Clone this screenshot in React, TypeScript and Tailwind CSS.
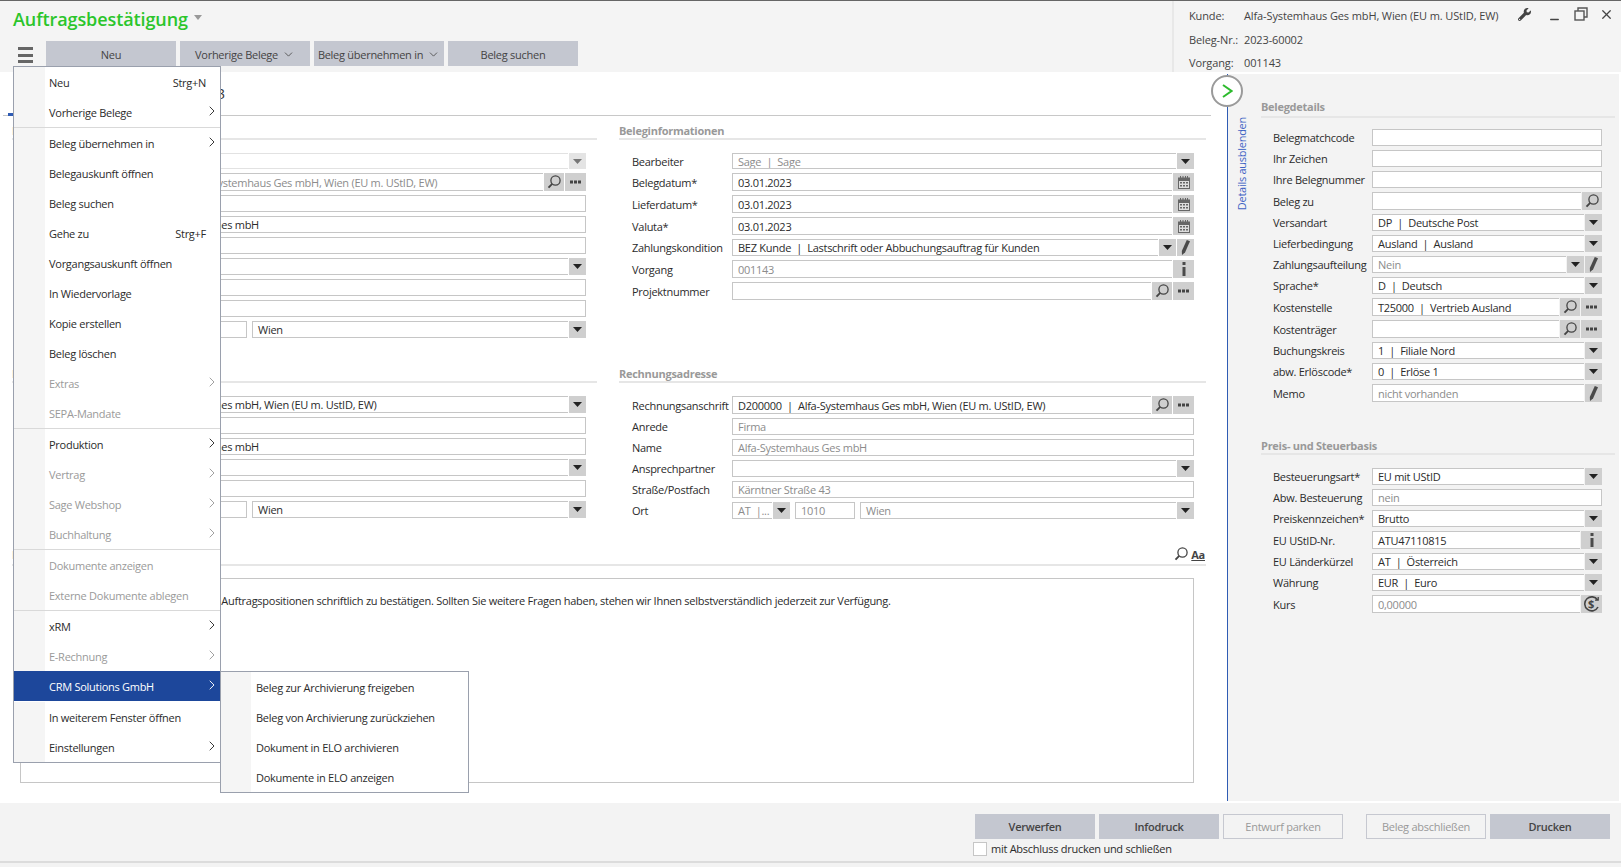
import React from 'react';
import { ChevronDown, ChevronRight, Minus, X } from 'lucide-react';
import { FaWrench } from 'react-icons/fa';

type Btn = 'select' | 'search' | 'dots' | 'calendar' | 'pencil' | 'info' | 'rate';

const SearchIcon = ({ size = 14 }: { size?: number }) => (
  <svg width={size} height={size} viewBox="0 0 14 14" fill="none" stroke="#444" strokeWidth="1.3">
    <circle cx="8.5" cy="5.5" r="4.6" />
    <path d="M5.2 8.8 1.5 12.6" strokeWidth="1.9" />
  </svg>
);

const BtnIcon = ({ type, off }: { type: Btn; off?: boolean }) => {
  if (type === 'select')
    return (
      <svg width="9" height="5" viewBox="0 0 9 5">
        <path d="M0 0h9L4.5 5z" fill={off ? '#777' : '#222'} />
      </svg>
    );
  if (type === 'search') return <SearchIcon />;
  if (type === 'dots')
    return (
      <svg width="11" height="4" viewBox="0 0 11 4" fill="#444">
        <rect width="3" height="3" y="0.5" />
        <rect width="3" height="3" x="4" y="0.5" />
        <rect width="3" height="3" x="8" y="0.5" />
      </svg>
    );
  if (type === 'calendar')
    return (
      <svg width="12" height="13" viewBox="0 0 12 13" fill="#666">
        <path d="M0 1.5h2V0h1v1.5h1.5V0h1v1.5H7V0h1v1.5h1V0h1v1.5h2V13H0z" />
        <path d="M1 5h10v7H1z" fill="#ddd" />
        <path d="M2 6h2v1.5H2zM5 6h2v1.5H5zM8 6h2v1.5H8zM2 9h2v1.5H2zM5 9h2v1.5H5zM8 9h2v1.5H8z" />
      </svg>
    );
  if (type === 'pencil')
    return (
      <svg width="9" height="15" viewBox="0 0 9 15" fill="#4a4a4a">
        <path d="M5.8 0 9 1.3 4 12.5 1 15 .8 11z" />
      </svg>
    );
  if (type === 'info')
    return (
      <svg width="4" height="14" viewBox="0 0 4 14" fill="#4a4a4a">
        <rect x="0.5" width="3" height="3" />
        <rect x="0.5" y="5" width="3" height="9" />
      </svg>
    );
  return (
    <svg width="17" height="16" viewBox="0 0 17 16" fill="none" stroke="#444" strokeWidth="1.6">
      <path d="M14.6 4A7 7 0 1 0 15 11" />
      <path d="M12 4.2h3.2V1" strokeWidth="1.3" />
      <text x="8" y="12" textAnchor="middle" fontSize="11" fontWeight="700" fill="#444" stroke="none" fontFamily="Open Sans">$</text>
    </svg>
  );
};

const btnWidth = (b: Btn) => {
  if (b === 'select' || b === 'pencil') return 'w-[17px]';
  if (b === 'search') return 'w-[20px]';
  return 'w-[21px]';
};

const Field = ({
  value = '',
  muted,
  off,
  btns = [],
  h = 'h-[17px]',
  className = 'w-full',
}: {
  value?: string;
  muted?: boolean;
  off?: boolean;
  btns?: Btn[];
  h?: string;
  className?: string;
}) => (
  <div className={`flex shrink-0 gap-px ${h} ${className}`}>
    <div
      className={`flex min-w-0 flex-1 items-center overflow-hidden whitespace-pre border bg-white pl-[5px] ${
        off ? 'border-[#e2e2e2]' : 'border-[#c6c6c6]'
      } ${btns.length ? 'border-r-0' : ''} ${muted ? 'text-[#8c8c8c]' : 'text-[#2b2b2b]'}`}
    >
      {value}
    </div>
    {btns.map((b, i) => (
      <div key={i} className={`flex items-center justify-center ${btnWidth(b)} ${off ? 'bg-[#e4e4e4]' : 'bg-[#cfcfcf]'}`}>
        <BtnIcon type={b} off={off} />
      </div>
    ))}
  </div>
);

const Row = ({ label, labelW, children }: { label?: string; labelW: string; children: React.ReactNode }) => (
  <div className="flex items-center">
    <div className={`shrink-0 whitespace-nowrap text-[#2b2b2b] ${labelW}`}>{label}</div>
    <div className="flex min-w-0 flex-1 gap-[5px]">{children}</div>
  </div>
);

const Heading = ({ children, className = 'pt-[6px]' }: { children?: React.ReactNode; className?: string }) => (
  <div className={`flex h-[24px] items-center border-b-2 border-[#e6e6e6] font-bold text-[#999] ${className}`}>
    {children}
  </div>
);

const OrtFields = ({ muted, plain }: { muted?: boolean; plain?: boolean }) => (
  <>
    <Field value={plain ? '' : 'AT  |...'} muted={muted} btns={['select']} className="w-[58px]" />
    <Field value={plain ? '' : '1010'} muted={muted} className="w-[60px]" />
    <Field value="Wien" muted={muted} btns={['select']} className="flex-1" />
  </>
);

const tall = 'h-[18px]';
const lw = 'w-[100px]';
const ll = 'w-[112px]';

// left column: the open menu lies over its labels
const LeftTop = () => (
  <div className="flex flex-col gap-1 pl-[12px] pr-[11px]">
    <Row labelW={ll}><Field off h="h-[16px]" btns={['select']} /></Row>
    <Row labelW={ll}><Field muted h={tall} value="D200000  |  Alfa-Systemhaus Ges mbH, Wien (EU m. UStID, EW)" btns={['search', 'dots']} /></Row>
    <Row labelW={ll}><Field /></Row>
    <Row labelW={ll}><Field value="Alfa-Systemhaus Ges mbH" /></Row>
    <Row labelW={ll}><Field /></Row>
    <Row labelW={ll}><Field btns={['select']} /></Row>
    <Row labelW={ll}><Field /></Row>
    <Row labelW={ll}><Field /></Row>
    <Row labelW={ll}><OrtFields plain /></Row>
  </div>
);

const LeftBottom = () => (
  <div className="flex flex-col gap-1 pl-[12px] pr-[11px]">
    <Row labelW={ll}><Field value="Alfa-Systemhaus Ges mbH, Wien (EU m. UstID, EW)" btns={['select']} /></Row>
    <Row labelW={ll}><Field /></Row>
    <Row labelW={ll}><Field value="Alfa-Systemhaus Ges mbH" /></Row>
    <Row labelW={ll}><Field btns={['select']} /></Row>
    <Row labelW={ll}><Field /></Row>
    <Row labelW={ll}><OrtFields plain /></Row>
  </div>
);

const RightTop = () => (
  <div className="flex flex-col gap-1 pl-[12px] pr-[12px]">
    <Row label="Bearbeiter" labelW={lw}><Field muted h="h-[16px]" value="Sage  |  Sage" btns={['select']} /></Row>
    <Row label="Belegdatum*" labelW={lw}><Field h={tall} value="03.01.2023" btns={['calendar']} /></Row>
    <Row label="Lieferdatum*" labelW={lw}><Field h={tall} value="03.01.2023" btns={['calendar']} /></Row>
    <Row label="Valuta*" labelW={lw}><Field h={tall} value="03.01.2023" btns={['calendar']} /></Row>
    <Row label="Zahlungskondition" labelW={lw}><Field value="BEZ Kunde  |  Lastschrift oder Abbuchungsauftrag für Kunden" btns={['select', 'pencil']} /></Row>
    <Row label="Vorgang" labelW={lw}><Field muted h={tall} value="001143" btns={['info']} /></Row>
    <Row label="Projektnummer" labelW={lw}><Field h={tall} btns={['search', 'dots']} /></Row>
  </div>
);

const RightBottom = () => (
  <div className="flex flex-col gap-1 pl-[12px] pr-[12px]">
    <Row label="Rechnungsanschrift" labelW={lw}><Field h={tall} value="D200000  |  Alfa-Systemhaus Ges mbH, Wien (EU m. UStID, EW)" btns={['search', 'dots']} /></Row>
    <Row label="Anrede" labelW={lw}><Field muted value="Firma" /></Row>
    <Row label="Name" labelW={lw}><Field muted value="Alfa-Systemhaus Ges mbH" /></Row>
    <Row label="Ansprechpartner" labelW={lw}><Field btns={['select']} /></Row>
    <Row label="Straße/Postfach" labelW={lw}><Field muted value="Kärntner Straße 43" /></Row>
    <Row label="Ort" labelW={lw}><OrtFields muted /></Row>
  </div>
);

const sl = 'w-[99px]';

const Sidebar = () => (
  <div className="mb-[2px] mr-[2px] mt-[2px] flex flex-1 border-l border-[#2f5cb4] bg-[#f3f3f3]">
    <div className="flex w-[33px] shrink-0 justify-center pr-[6px] pt-[43px]">
      <div className="h-fit rotate-180 text-[#3f63c4] [writing-mode:vertical-rl]">Details ausblenden</div>
    </div>
    <div className="flex-1 pr-[4px]">
      <Heading className="mt-[20px] pt-[2px]">Belegdetails</Heading>
      <div className="mt-[11px] flex flex-col gap-1 pl-[12px] pr-[13px]">
        <Row label="Belegmatchcode" labelW={sl}><Field /></Row>
        <Row label="Ihr Zeichen" labelW={sl}><Field /></Row>
        <Row label="Ihre Belegnummer" labelW={sl}><Field /></Row>
        <Row label="Beleg zu" labelW={sl}><Field h={tall} btns={['search']} /></Row>
        <Row label="Versandart" labelW={sl}><Field value="DP  |  Deutsche Post" btns={['select']} /></Row>
        <Row label="Lieferbedingung" labelW={sl}><Field value="Ausland  |  Ausland" btns={['select']} /></Row>
        <Row label="Zahlungsaufteilung" labelW={sl}><Field muted value="Nein" btns={['select', 'pencil']} /></Row>
        <Row label="Sprache*" labelW={sl}><Field value="D  |  Deutsch" btns={['select']} /></Row>
        <Row label="Kostenstelle" labelW={sl}><Field h={tall} value="T25000  |  Vertrieb Ausland" btns={['search', 'dots']} /></Row>
        <Row label="Kostenträger" labelW={sl}><Field h={tall} btns={['search', 'dots']} /></Row>
        <Row label="Buchungskreis" labelW={sl}><Field value="1  |  Filiale Nord" btns={['select']} /></Row>
        <Row label="abw. Erlöscode*" labelW={sl}><Field value="0  |  Erlöse 1" btns={['select']} /></Row>
        <Row label="Memo" labelW={sl}><Field muted h={tall} value="nicht vorhanden" btns={['pencil']} /></Row>
      </div>
      <Heading className="mt-[29px] pt-[6px]">Preis- und Steuerbasis</Heading>
      <div className="mt-[13px] flex flex-col gap-1 pl-[12px] pr-[13px]">
        <Row label="Besteuerungsart*" labelW={sl}><Field value="EU mit UStID" btns={['select']} /></Row>
        <Row label="Abw. Besteuerung" labelW={sl}><Field muted value="nein" /></Row>
        <Row label="Preiskennzeichen*" labelW={sl}><Field value="Brutto" btns={['select']} /></Row>
        <Row label="EU UStID-Nr." labelW={sl}><Field h={tall} value="ATU47110815" btns={['info']} /></Row>
        <Row label="EU Länderkürzel" labelW={sl}><Field value="AT  |  Österreich" btns={['select']} /></Row>
        <Row label="Währung" labelW={sl}><Field value="EUR  |  Euro" btns={['select']} /></Row>
        <Row label="Kurs" labelW={sl}><Field muted h={tall} value="0,00000" btns={['rate']} /></Row>
      </div>
    </div>
  </div>
);

type Item = { t: string; key?: string; arrow?: boolean; off?: boolean; sep?: boolean; active?: boolean };

const menu: Item[] = [
  { t: 'Neu', key: 'Strg+N' },
  { t: 'Vorherige Belege', arrow: true, sep: true },
  { t: 'Beleg übernehmen in', arrow: true },
  { t: 'Belegauskunft öffnen' },
  { t: 'Beleg suchen' },
  { t: 'Gehe zu', key: 'Strg+F' },
  { t: 'Vorgangsauskunft öffnen' },
  { t: 'In Wiedervorlage' },
  { t: 'Kopie erstellen' },
  { t: 'Beleg löschen' },
  { t: 'Extras', arrow: true, off: true },
  { t: 'SEPA-Mandate', off: true, sep: true },
  { t: 'Produktion', arrow: true },
  { t: 'Vertrag', arrow: true, off: true },
  { t: 'Sage Webshop', arrow: true, off: true },
  { t: 'Buchhaltung', arrow: true, off: true, sep: true },
  { t: 'Dokumente anzeigen', off: true },
  { t: 'Externe Dokumente ablegen', off: true, sep: true },
  { t: 'xRM', arrow: true },
  { t: 'E-Rechnung', arrow: true, off: true },
  { t: 'CRM Solutions GmbH', arrow: true, active: true },
  { t: 'In weiterem Fenster öffnen' },
  { t: 'Einstellungen', arrow: true },
];

const MenuRow = ({ item }: { item: Item }) => (
  <div
    className={`flex h-[30px] items-center ${item.sep ? 'box-content border-b border-[#d9d9d9]' : ''} ${
      item.active ? 'mb-px bg-[#1d479b] text-white' : item.off ? 'text-[#9a9a9a]' : 'text-[#2b2b2b]'
    }`}
  >
    <div className={`h-full w-[31px] shrink-0 ${item.active ? '' : 'bg-[#f5f5f5]'}`} />
    <div className="flex min-w-0 flex-1 items-center pl-[4px]">
      <span className="flex-1 whitespace-nowrap">{item.t}</span>
      {item.key && <span className="pr-[14px]">{item.key}</span>}
      {item.arrow && <ChevronRight size={16} strokeWidth={1.4} className="-mt-[3px]" />}
    </div>
  </div>
);

const Button = ({ label, off, w = 'w-[120px]' }: { label: string; off?: boolean; w?: string }) => (
  <div
    className={`flex h-[25px] items-center justify-center ${w} ${
      off ? 'border border-[#c6c8d0] bg-[#f3f3f3] text-[#999]' : 'bg-[#c4c7d0] font-semibold text-[#444]'
    }`}
  >
    {label}
  </div>
);

export default function App() {
  return (
    <div className="relative flex h-[867px] w-[1621px] flex-col overflow-hidden bg-white font-['Open_Sans','Noto_Sans',sans-serif] text-[11px] leading-none tracking-[-0.27px]">
      {/* top bar */}
      <div className="flex h-[72px] shrink-0 border-t border-[#666] bg-[#f4f4f4]">
        <div className="flex-1">
          <div className="flex h-[40px] items-start pl-[13px] pt-[5px]">
            <span className="text-[18px] font-semibold leading-[26px] tracking-[-0.1px] text-[#2bc52b]">Auftragsbestätigung</span>
            <svg width="8" height="5" viewBox="0 0 8 5" className="ml-[6px] mt-[9px]">
              <path d="M0 0h8L4 5z" fill="#999" />
            </svg>
          </div>
          <div className="flex items-start pl-[18px]">
            <div className="mr-[13px] mt-[6px] flex w-[15px] flex-col gap-[3.5px]">
              <div className="h-[3px] bg-[#666]" />
              <div className="h-[3px] bg-[#666]" />
              <div className="h-[3px] bg-[#666]" />
            </div>
            <div className="flex gap-1 text-[#444]">
              <Button label="Neu" w="w-[130px] pt-px !font-normal" />
              <div className="flex h-[25px] w-[130px] items-center justify-center gap-1 bg-[#c4c7d0] pt-px">
                Vorherige Belege <ChevronDown size={13} strokeWidth={1.5} />
              </div>
              <div className="flex h-[25px] w-[130px] items-center justify-center gap-1 bg-[#c4c7d0] pt-px">
                Beleg übernehmen in <ChevronDown size={13} strokeWidth={1.5} />
              </div>
              <Button label="Beleg suchen" w="w-[130px] pt-px !font-normal" />
            </div>
          </div>
        </div>
        <div className="flex w-[449px] border-l-2 border-[#e8e8e8] pl-[15px] tracking-[-0.12px] text-[#444]">
          <div className="w-[322px] pt-[8px]">
            <div className="flex h-[12px] items-center"><span className="w-[55px]">Kunde:</span>Alfa-Systemhaus Ges mbH, Wien (EU m. UStID, EW)</div>
            <div className="mt-[12px] flex h-[12px] items-center"><span className="w-[55px]">Beleg-Nr.:</span>2023-60002</div>
            <div className="mt-[11px] flex h-[12px] items-center"><span className="w-[55px]">Vorgang:</span>001143</div>
          </div>
          <div className="flex items-start pt-[6px] text-[#444]">
            <FaWrench size={13} className="ml-[7px] mt-[1px]" />
            <Minus size={13} strokeWidth={2.4} className="ml-[17px] mt-[6px]" />
            <svg width="14" height="14" viewBox="0 0 14 14" fill="none" stroke="#555" strokeWidth="1.4" className="ml-[13px]">
              <rect x="1" y="4" width="9" height="9" />
              <path d="M4 4V1h9v9h-3" />
            </svg>
            <X size={15} strokeWidth={2} className="ml-[11px]" />
          </div>
        </div>
      </div>

      {/* middle */}
      <div className="flex h-[731px] shrink-0">
        <div className="flex w-[1227px] shrink-0 flex-col">
          <div className="relative ml-[3px] mr-[16px] flex h-[44px] shrink-0 items-center border-b border-[#c8c8c8] pt-px text-[14px] tracking-normal">
            <div className="w-[222px] whitespace-nowrap text-right text-[#333]">Auftrag vom 03.01.2023</div>
            <div className="absolute bottom-[-1px] left-[5px] h-[3px] w-[5px] bg-[#2f5cb4]" />
          </div>
          <div className="grid h-[243px] shrink-0 grid-cols-[597px_609px]">
            <div>
              <Heading className="mb-[13px] ml-[12px] pt-[6px]">Kundenadresse</Heading>
              <LeftTop />
            </div>
            <div className="pl-[23px]">
              <Heading className="mb-[13px] -ml-px pt-[6px]">Beleginformationen</Heading>
              <RightTop />
            </div>
          </div>
          <div className="grid h-[183px] shrink-0 grid-cols-[597px_609px]">
            <div>
              <Heading className="mb-[13px] ml-[12px] pt-[6px]">Lieferadresse</Heading>
              <LeftBottom />
            </div>
            <div className="pl-[23px]">
              <Heading className="mb-[13px] -ml-px pt-[6px]">Rechnungsadresse</Heading>
              <RightBottom />
            </div>
          </div>
          <div className="ml-[12px] mr-[21px] flex h-[24px] items-center justify-between border-b-2 border-[#e6e6e6] pr-[1px] pt-[2px]">
            <span className="font-bold text-[#999]">Nachbemerkung</span>
            <span className="flex items-center gap-[3px] text-[#444]">
              <SearchIcon />
              <span className="font-bold underline">Aa</span>
            </span>
          </div>
          <div className="ml-[20px] mr-[33px] mt-[12px] h-[205px] border border-[#c6c6c6] pl-[6px] pt-[16px] text-[#2b2b2b]">
            Herzlichen Dank! Wir bitten Sie nun, die Auftragspositionen schriftlich zu bestätigen. Sollten Sie weitere Fragen haben, stehen wir Ihnen selbstverständlich jederzeit zur Verfügung.
          </div>
        </div>
        <Sidebar />
      </div>

      {/* bottom bar */}
      <div className="flex-1 bg-[#f3f3f3]">
        <div className="h-[60px] border-b-2 border-[#dcdcdc] pl-[973px] pt-[11px]">
          <div className="ml-[2px] flex gap-1">
            <Button label="Verwerfen" />
            <Button label="Infodruck" />
            <Button label="Entwurf parken" off />
            <div className="w-[15px]" />
            <Button label="Beleg abschließen" off />
            <Button label="Drucken" />
          </div>
          <div className="mt-[3px] flex items-center gap-[4px] text-[#2b2b2b]">
            <div className="h-[14px] w-[14px] border border-[#c6c6c6] bg-white" />
            <span className="pb-[2px]">mit Abschluss drucken und schließen</span>
          </div>
        </div>
      </div>

      {/* overlays */}
      <div className="absolute left-[1211px] top-[75px] flex h-[32px] w-[32px] items-center justify-center rounded-full border-2 border-[#9a9a9a] bg-white">
        <svg width="11" height="14" viewBox="0 0 11 14" fill="none" stroke="#2dbb2d" strokeWidth="2">
          <path d="M1 1l8.5 6L1 13" />
        </svg>
      </div>
      <div className="absolute left-[13px] top-[66px] w-[208px] border border-[#9aa0ad] bg-white">
        {menu.map((m) => (
          <MenuRow key={m.t} item={m} />
        ))}
      </div>
      <div className="absolute left-[220px] top-[671px] w-[249px] border border-[#9aa0ad] bg-white text-[#2b2b2b]">
        {['Beleg zur Archivierung freigeben', 'Beleg von Archivierung zurückziehen', 'Dokument in ELO archivieren', 'Dokumente in ELO anzeigen'].map((t) => (
          <div key={t} className="flex h-[30px] items-center">
            <div className="h-full w-[30px] bg-[#f5f5f5]" />
            <span className="pl-[5px]">{t}</span>
          </div>
        ))}
      </div>
    </div>
  );
}
